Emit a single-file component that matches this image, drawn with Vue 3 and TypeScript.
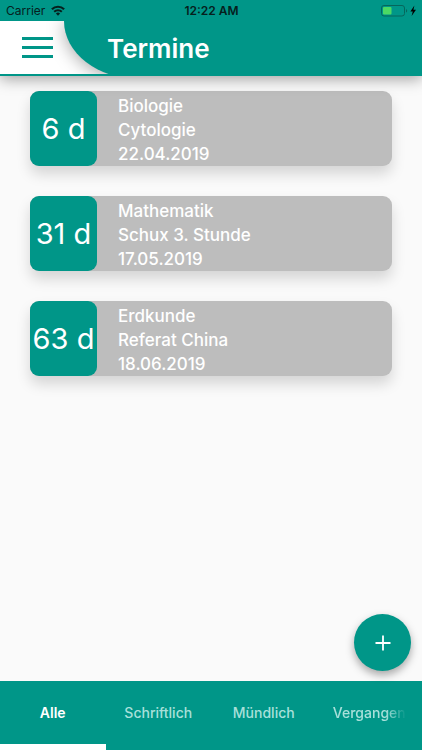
<script setup lang="ts">
import { ref } from 'vue'

interface Appointment {
  days: number
  subject: string
  topic: string
  date: string
}

const appointments: Appointment[] = [
  { days: 6, subject: 'Biologie', topic: 'Cytologie', date: '22.04.2019' },
  { days: 31, subject: 'Mathematik', topic: 'Schux 3. Stunde', date: '17.05.2019' },
  { days: 63, subject: 'Erdkunde', topic: 'Referat China', date: '18.06.2019' },
]

const tabs: string[] = ['Alle', 'Schriftlich', 'Mündlich', 'Vergangen']
const activeTab = ref<string>('Alle')
</script>

<template>
  <div class="screen">
    <header class="top">
      <div class="status">
        <div class="carrier">
          <span>Carrier</span>
          <svg class="wifi" width="14" height="11" viewBox="0 0 14 11" aria-hidden="true">
            <path d="M0.9 4.3a8.6 8.6 0 0 1 12.2 0" fill="none" stroke="#06201d" stroke-width="2.2" />
            <path d="M3.2 6.7a5.4 5.4 0 0 1 7.6 0" fill="none" stroke="#06201d" stroke-width="2" />
            <path d="M4.9 8.6a3 3 0 0 1 4.2 0L7 10.8z" fill="#06201d" />
          </svg>
        </div>
        <time class="clock">12:22 AM</time>
        <div class="power">
          <svg width="36" height="12" viewBox="0 0 36 12" aria-hidden="true">
            <rect x="0.5" y="0.5" width="23" height="10.5" rx="2.5" fill="none" stroke="#06665c" />
            <rect x="2" y="2" width="8.5" height="7.5" rx="1" fill="#4cd964" />
            <path d="M25 4c1.6.4 1.6 3.2 0 3.6z" fill="#06665c" />
            <path d="M33.4 0.6 29.4 6.4h2.4l-1.2 4.6L35 4.8h-2.6z" fill="#000" />
          </svg>
        </div>
      </div>
      <div class="bar">
        <button class="menu" type="button" aria-label="Menü">
          <span class="line"></span>
          <span class="line"></span>
          <span class="line"></span>
        </button>
        <div class="title">
          <h1>Termine</h1>
        </div>
      </div>
    </header>

    <main class="list">
      <article v-for="item in appointments" :key="item.date" class="card">
        <div class="days">{{ item.days }} d</div>
        <div class="info">
          <span>{{ item.subject }}</span>
          <span>{{ item.topic }}</span>
          <span>{{ item.date }}</span>
        </div>
      </article>
      <button class="add" type="button" aria-label="Termin hinzufügen">
        <svg width="16" height="16" viewBox="0 0 16 16" aria-hidden="true">
          <path d="M8 0.5v15M0.5 8h15" stroke="#fff" stroke-width="1.8" />
        </svg>
      </button>
    </main>

    <nav class="tabs">
      <button
        v-for="tab in tabs"
        :key="tab"
        type="button"
        class="tab"
        :class="{ active: tab === activeTab }"
        @click="activeTab = tab"
      >
        <span class="label">{{ tab }}</span>
      </button>
    </nav>
  </div>
</template>

<style>
body {
  margin: 0;
  background: #fafafa;
}
</style>

<style scoped>
.screen {
  display: flex;
  flex-direction: column;
  min-height: 100vh;
  background: #fafafa;
  font-family: Inter, 'Liberation Sans', sans-serif;
  color: #fff;
}

button {
  margin: 0;
  padding: 0;
  border: 0;
  font: inherit;
  color: inherit;
  cursor: pointer;
}

.top {
  position: relative;
  z-index: 1;
  box-shadow: 0 3px 14px rgba(0, 0, 0, 0.36);
}

.status {
  position: relative;
  z-index: 1;
  display: grid;
  grid-template-columns: 1fr auto 1fr;
  align-items: center;
  height: 21px;
  padding: 0 5px 0 6px;
  background: #009688;
  color: #06201d;
  font-size: 12px;
}

.carrier {
  display: flex;
  align-items: center;
  gap: 6px;
}

.clock {
  font-weight: 600;
}

.power {
  display: flex;
  justify-content: flex-end;
}

.bar {
  display: flex;
  height: 53px;
  overflow: hidden;
  background: #fff;
  border-bottom: 2px solid #009688;
}

.menu {
  display: flex;
  flex: none;
  flex-direction: column;
  gap: 6px;
  width: 64px;
  padding: 16px 11px 0 22px;
  background: none;
}

.line {
  width: 31px;
  height: 3px;
  background: #009688;
}

/* Taller than the bar, so the curve meets the bottom line at an angle. */
.title {
  box-sizing: border-box;
  display: flex;
  flex: 1;
  align-items: center;
  height: 58px;
  padding: 0 0 3px 43px;
  background: #009688;
  border-bottom-left-radius: 75px 58px;
  box-shadow: 0 2px 18px rgba(0, 0, 0, 0.36);
}

h1 {
  margin: 0;
  font-size: 26px;
  font-weight: 600;
  line-height: 32px;
}

.list {
  position: relative;
  display: flex;
  flex: 1;
  flex-direction: column;
  gap: 30px;
  padding: 15px 30px;
}

.card {
  display: flex;
  height: 75px;
  border-radius: 9px;
  background: #bdbdbd;
  box-shadow: 0 8px 14px rgba(0, 0, 0, 0.15);
}

.days {
  display: flex;
  flex: none;
  align-items: center;
  justify-content: center;
  width: 67px;
  border-radius: 9px;
  background: #009688;
  font-size: 29px;
  white-space: nowrap;
}

.info {
  display: flex;
  flex-direction: column;
  padding: 3px 0 0 21px;
  font-size: 17px;
  font-weight: 500;
  line-height: 24px;
}

.add {
  position: absolute;
  right: 11px;
  bottom: 10px;
  display: flex;
  align-items: center;
  justify-content: center;
  width: 57px;
  height: 57px;
  border-radius: 50%;
  background: #009688;
  box-shadow: 0 4px 9px rgba(0, 0, 0, 0.34);
}

.tabs {
  display: grid;
  grid-template-columns: repeat(4, 1fr);
  height: 69px;
  background: #009688;
}

.tab {
  min-width: 0;
  padding: 0 16px;
  border-top: 6px solid transparent;
  border-bottom: 6px solid transparent;
  background: none;
  color: #a8e0da;
  font-size: 14px;
  font-weight: 500;
}

.active {
  border-bottom-color: #fff;
  color: #fff;
  font-weight: 600;
}

.label {
  display: block;
  overflow: hidden;
  padding-bottom: 6px;
  white-space: nowrap;
}

.tab:last-child .label {
  mask-image: linear-gradient(to right, #000 calc(100% - 20px), transparent);
}
</style>
